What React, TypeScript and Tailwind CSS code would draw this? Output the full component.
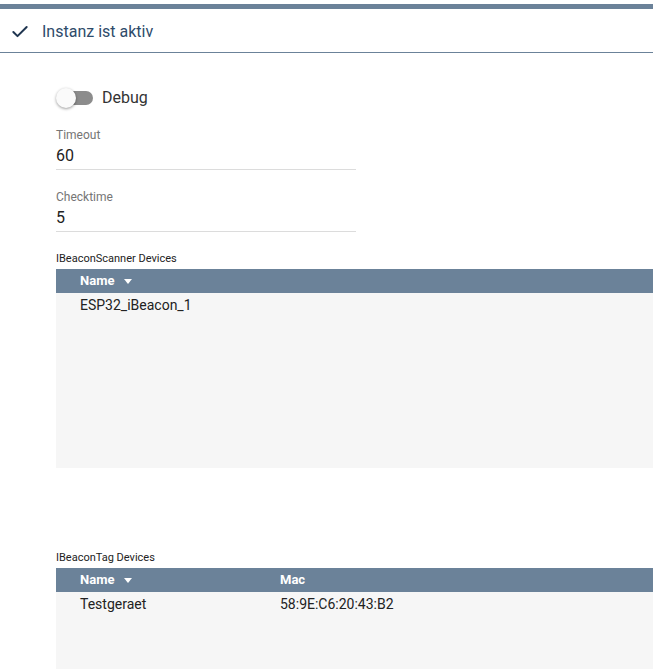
import { Check } from 'lucide-react';

function Field({ label, value }: { label: string; value: string }) {
  return (
    <div className="w-[300px] border-b border-[#dcdcdc] pb-[4px]">
      <div className="text-[12px] leading-[14px] text-[#757575]">{label}</div>
      <div className="mt-[5px] text-[16px] leading-[18px] text-[#222]">{value}</div>
    </div>
  );
}

function SortArrow() {
  return <span className="ml-[10px] inline-block border-x-[4px] border-t-[5px] border-x-transparent border-t-white align-middle" />;
}

export default function App() {
  return (
    <div className="min-h-[669px] bg-white font-['Roboto',sans-serif]">
      <div className="pt-1">
        <div className="h-[5px] bg-[#6b8299]" />
      </div>

      {/* Header */}
      <div className="flex h-[44px] items-center border-b border-[#6b8299] pl-[10px] pt-[2px]">
        <Check className="h-[20px] w-[20px] text-[#1f3550]" strokeWidth={2.4} />
        <span className="ml-[12px] text-[16px] text-[#2e4b6a]">Instanz ist aktiv</span>
      </div>

      <div className="pl-[56px]">
        {/* Debug switch */}
        <div className="mt-[33px] flex items-center">
          <div className="relative h-[20px] w-[38px]">
            <div className="absolute left-[3px] top-[3px] h-[14px] w-[34px] rounded-full bg-[#8c8c8c]" />
            <div className="absolute left-0 top-0 h-[20px] w-[20px] rounded-full bg-[#fafafa] shadow-[0_1px_3px_rgba(0,0,0,0.4)]" />
          </div>
          <span className="ml-[8px] text-[16px] text-[#333]">Debug</span>
        </div>

        <div className="mt-[18px]">
          <Field label="Timeout" value="60" />
        </div>
        <div className="mt-[20px]">
          <Field label="Checktime" value="5" />
        </div>

        {/* Scanner devices */}
        <div className="mt-[20px] text-[11px] leading-[13px] text-[#222]">IBeaconScanner Devices</div>
        <div className="mt-[4px]">
          <div className="flex h-[24px] items-center bg-[#6b8299] pl-[24px] text-[13px] font-bold text-white">
            Name
            <SortArrow />
          </div>
          <div className="h-[175px] bg-[#f6f6f6] pl-[24px] pt-[3px] text-[14px] leading-[18px] text-[#222]">
            ESP32_iBeacon_1
          </div>
        </div>

        {/* Tag devices */}
        <div className="mt-[83px] text-[11px] leading-[13px] text-[#222]">IBeaconTag Devices</div>
        <div className="mt-[4px]">
          <div className="flex h-[24px] items-center bg-[#6b8299] text-[13px] font-bold text-white">
            <div className="w-[224px] pl-[24px]">
              Name
              <SortArrow />
            </div>
            <div>Mac</div>
          </div>
          <div className="flex h-[80px] bg-[#f6f6f6] pt-[3px] text-[14px] leading-[18px] text-[#222]">
            <div className="w-[224px] pl-[24px]">Testgeraet</div>
            <div>58:9E:C6:20:43:B2</div>
          </div>
        </div>
      </div>
    </div>
  );
}
